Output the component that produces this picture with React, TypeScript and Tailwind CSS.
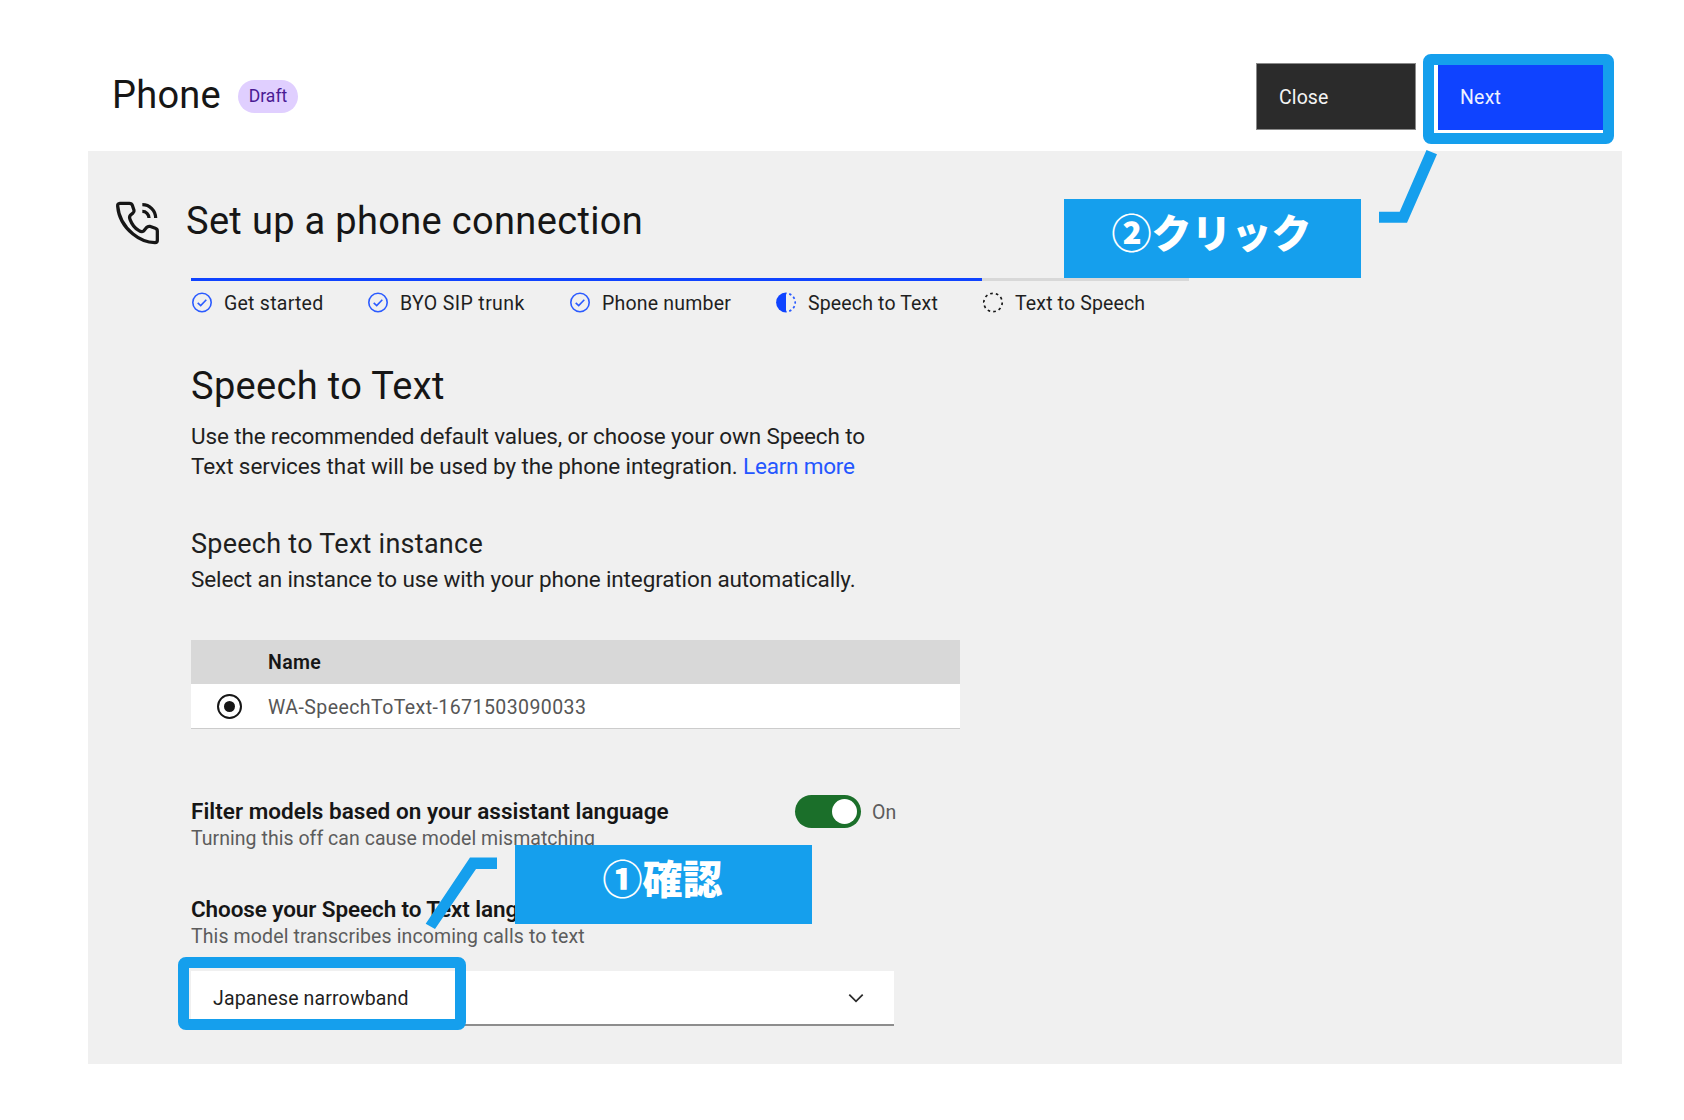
import type { ReactNode } from "react";

function PhoneVoiceIcon() {
  return (
    <svg className="h-[66px] w-[70px] shrink-0" viewBox="0 0 210 198" fill="none" stroke="#161616" strokeWidth="9.8" strokeLinejoin="round">
      <path d="M45 40H73Q80 40 82 46L87 61Q88 66 84 69L76 76Q72 81 75 88Q84 112 102 122Q110 127 116 123L124 113Q129 108 134 109L151 115Q157 117 157 123V151Q157 158 150 158Q114 157 84 132Q42 98 38 48Q37 41 45 40Z" />
      <path d="M112 44A40 40 0 0 1 152 84M112 64A20 20 0 0 1 132 84" />
    </svg>
  );
}

function DoneIcon() {
  return (
    <svg className="size-[22px] shrink-0" viewBox="0 0 22 22" fill="none" stroke="#2b5bff" strokeWidth="1.6">
      <circle cx="11" cy="10.5" r="9.2" />
      <path d="M6.7 10.8l3 2.8 5.6-5.9" />
    </svg>
  );
}

function CurrentIcon() {
  return (
    <svg className="size-[22px] shrink-0" viewBox="0 0 22 22" fill="none">
      <path d="M11 .6a9.9 9.9 0 0 0 0 19.8z" fill="#0f43ff" />
      <path d="M11 1.3a9.2 9.2 0 0 1 0 18.4" pathLength="180" stroke="#2b5bff" strokeWidth="1.7" strokeDasharray="15 16" strokeDashoffset="-20.5" />
    </svg>
  );
}

function UpcomingIcon() {
  return (
    <svg className="size-[22px] shrink-0" viewBox="0 0 22 22" fill="none">
      <circle cx="11" cy="10.5" r="9.2" pathLength="100" stroke="#161616" strokeWidth="1.7" strokeDasharray="4.6 5.4" />
    </svg>
  );
}

function Step({ icon, className, children }: { icon: ReactNode; className: string; children: ReactNode }) {
  return (
    <li className={`flex h-6 shrink-0 items-center gap-[11px] whitespace-nowrap text-[19.5px] leading-6 ${className}`}>
      {icon}
      <span className="pt-px">{children}</span>
    </li>
  );
}

function Callout({ className, children }: { className: string; children: ReactNode }) {
  return (
    <div
      className={`absolute flex h-[79px] items-center justify-center bg-[#159fed] pr-[2px] pb-[16px] font-['Noto_Sans_CJK_JP',sans-serif] text-[40px] leading-none font-black text-white ${className}`}
    >
      {children}
    </div>
  );
}

export default function App() {
  return (
    <div className="relative h-[1120px] w-[1684px] overflow-hidden bg-white font-['Roboto',sans-serif] text-[#1f1f1f]">
      <header className="flex h-[151px] pl-[112px]">
        <h1 className="mt-[73px] w-[126px] text-[38px] leading-[44px] tracking-[0.25px] text-[#161616]">Phone</h1>
        <span className="mt-[80px] flex h-[33px] w-[60px] items-center justify-center rounded-full bg-[#e0cfff] text-[17.5px] text-[#4a1a94]">
          Draft
        </span>
        <button className="mt-[63px] ml-[958px] h-[67px] w-[160px] border border-[#8a8a8a] bg-[#2b2b2b] pt-[2px] pl-[22px] text-left text-[19.5px] tracking-[0.1px] text-[#f4f4f4]">
          Close
        </button>
        <button className="mt-[63px] ml-[22px] h-[67px] w-[165px] bg-[#0f43ff] pt-[2px] pl-[22px] text-left text-[19.5px] tracking-[0.19px] text-[#eef1ff]">
          Next
        </button>
      </header>

      <main className="ml-[88px] h-[913px] w-[1534px] bg-[#f0f0f0] pt-[39px]">
        <div className="flex items-center pl-[17px]">
          <PhoneVoiceIcon />
          <h2 className="ml-[11px] pb-[5px] text-[38px] leading-[44px] tracking-[0.33px] text-[#161616]">Set up a phone connection</h2>
        </div>

        <div className="pl-[103px]">
          <div className="mt-[22px] h-[3px] w-[998px] bg-[#d8d8d8]">
            <div className="h-full w-[791px] bg-[#0f43ff]" />
          </div>
          <ol className="mt-[10px] flex">
            <Step icon={<DoneIcon />} className="w-[176px] tracking-[0.25px]">Get started</Step>
            <Step icon={<DoneIcon />} className="w-[202px] tracking-[0.38px]">BYO SIP trunk</Step>
            <Step icon={<DoneIcon />} className="w-[206px] tracking-[0.2px]">Phone number</Step>
            <Step icon={<CurrentIcon />} className="w-[207px] tracking-[0.15px]">Speech to Text</Step>
            <Step icon={<UpcomingIcon />} className="w-[180px] tracking-[0.14px]">Text to Speech</Step>
          </ol>

          <h3 className="mt-[49px] text-[38px] leading-[44px] tracking-[0.33px] text-[#161616]">Speech to Text</h3>
          <p className="mt-[13px] text-[22.5px] leading-[30px] tracking-[-0.14px] whitespace-nowrap">
            Use the recommended default values, or choose your own Speech to
            <br />
            <span className="tracking-[-0.1px]">Text services that will be used by the phone integration. </span>
            <a className="tracking-[-0.22px] text-[#2456ff]">Learn more</a>
          </p>

          <h4 className="mt-[46px] text-[27px] leading-[34px] tracking-[0.26px]">Speech to Text instance</h4>
          <p className="mt-[3px] text-[22.5px] leading-[30px] tracking-[-0.12px]">
            Select an instance to use with your phone integration automatically.
          </p>

          <div className="mt-[46px] w-[769px] border-b border-[#cccccc] bg-white text-[19.5px]">
            <div className="flex h-[44px] items-center bg-[#d8d8d8] pt-[2px] pl-[77px] font-semibold tracking-[0.35px] text-[#161616]">Name</div>
            <div className="flex h-[44px] items-center pl-[26px]">
              <span className="flex size-[25px] items-center justify-center rounded-full border-2 border-[#161616]">
                <span className="size-[11px] rounded-full bg-[#161616]" />
              </span>
              <span className="mt-[4px] ml-[26px] tracking-[0.43px] text-[#565656]">WA-SpeechToText-1671503090033</span>
            </div>
          </div>

          <div className="mt-[66px] flex">
            <div className="w-[604px] pt-px">
              <div className="text-[22.5px] leading-[30px] font-semibold tracking-[0.04px] text-[#161616]">
                Filter models based on your assistant language
              </div>
              <div className="pt-px text-[19.5px] leading-6 tracking-[0.04px] text-[#5c5c5c]">Turning this off can cause model mismatching</div>
            </div>
            <span className="flex h-[33px] w-[66px] items-center justify-end rounded-full bg-[#1b6f2a] pr-[4px]">
              <span className="size-[25px] rounded-full bg-white" />
            </span>
            <span className="ml-[11px] text-[19.5px] leading-[36px] text-[#5c5c5c]">On</span>
          </div>

          <div className="mt-[43px] text-[22.5px] leading-[30px] font-semibold tracking-[-0.1px] text-[#161616]">
            Choose your Speech to Text language model
          </div>
          <div className="pt-px text-[19.5px] leading-6 tracking-[0.12px] text-[#5c5c5c]">This model transcribes incoming calls to text</div>
          <div className="mt-[22px] flex h-[55px] w-[703px] items-center justify-between border-b-2 border-[#8d8d8d] bg-white pr-[30px] pl-[22px] text-[19.5px] tracking-[0.15px]">
            <span className="pt-[2px]">Japanese narrowband</span>
            <svg className="h-[10px] w-[16px]" viewBox="0 0 16 10" fill="none" stroke="#2b2b2b" strokeWidth="1.8">
              <path d="M1.3 1.7l6.7 6.6 6.7-6.6" />
            </svg>
          </div>
        </div>
      </main>

      {/* Walkthrough annotations laid over the form */}
      <div className="absolute top-[54px] left-[1423px] h-[90px] w-[191px] rounded-[8px] border-[11px] border-[#159fed]" />
      <Callout className="top-[199px] left-[1064px] w-[297px]">②クリック</Callout>
      <svg className="absolute top-[150px] left-[1379px] h-[73px] w-[58px]" viewBox="0 0 58 73" fill="#159fed">
        <path d="M0 61.7H20.7L47.5 0L58 4.3L28 72.8H0Z" />
      </svg>
      <div className="absolute top-[957px] left-[178px] h-[73px] w-[288px] rounded-[8px] border-[11px] border-[#159fed]" />
      <Callout className="top-[845px] left-[515px] w-[297px]">①確認</Callout>
      <svg className="absolute top-[857px] left-[425px] h-[73px] w-[73px]" viewBox="0 0 73 73" fill="#159fed">
        <path d="M45 .5H72V12H51L10 72L.7 66.7Z" />
      </svg>
    </div>
  );
}
